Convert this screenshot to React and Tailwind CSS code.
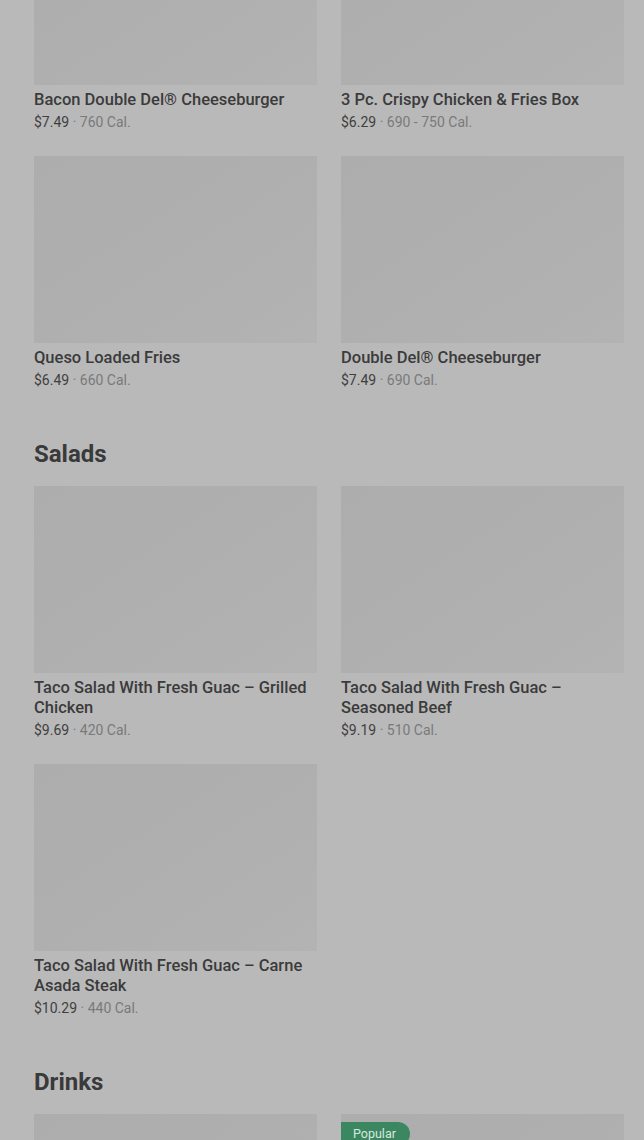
const font = { fontFamily: "Roboto, 'Noto Sans', sans-serif" };

const rows = [
  [
    { name: "Bacon Double Del® Cheeseburger", price: "$7.49", cal: "760 Cal." },
    { name: "3 Pc. Crispy Chicken & Fries Box", price: "$6.29", cal: "690 - 750 Cal." },
  ],
  [
    { name: "Queso Loaded Fries", price: "$6.49", cal: "660 Cal." },
    { name: "Double Del® Cheeseburger", price: "$7.49", cal: "690 Cal." },
  ],
];

const salads = [
  [
    { name: "Taco Salad With Fresh Guac – Grilled Chicken", price: "$9.69", cal: "420 Cal." },
    { name: "Taco Salad With Fresh Guac – Seasoned Beef", price: "$9.19", cal: "510 Cal." },
  ],
  [{ name: "Taco Salad With Fresh Guac – Carne Asada Steak", price: "$10.29", cal: "440 Cal." }],
];

const Card = ({ item, badge }) => (
  <div className="flex flex-col">
    <div className="relative h-[187px] bg-gradient-to-br from-[#adadad] via-[#afafaf] to-[#b3b3b3]">
      {badge && (
        <span className="absolute left-0 top-2 rounded-r-full bg-[#3b8761] pl-3 pr-[14px] text-[12.5px] leading-6 text-[#d9e8df]">
          {badge}
        </span>
      )}
    </div>
    {item && (
      <>
        <div className="mt-[5px] text-[16.5px] font-medium leading-5 text-[#3b3b3b]">{item.name}</div>
        <div className="mt-[2px] text-[14px] leading-5">
          <span className="text-[#3f3f3f]">{item.price}</span>
          <span className="text-[#7a7a7a]"> · {item.cal}</span>
        </div>
      </>
    )}
  </div>
);

const Grid = ({ rows }) => (
  <div className="flex flex-col gap-6">
    {rows.map((r, i) => (
      <div key={i} className="grid grid-cols-2 gap-6">
        {r.map((item) => (
          <Card key={item.name} item={item} />
        ))}
      </div>
    ))}
  </div>
);

export default function App() {
  return (
    <div className="h-[1140px] overflow-hidden bg-[#b9b9b9]" style={font}>
      <div className="-mt-[102px] pl-[34px] pr-5">
        <Grid rows={rows} />

        <h2 className="mt-[48px] mb-[16px] text-[24px] font-bold leading-8 text-[#3a3a3a]">Salads</h2>
        <Grid rows={salads} />

        <h2 className="mt-[48px] mb-[16px] text-[24px] font-bold leading-8 text-[#3a3a3a]">Drinks</h2>
        <div className="grid grid-cols-2 gap-6">
          <Card />
          <Card badge="Popular" />
        </div>
      </div>
    </div>
  );
}
